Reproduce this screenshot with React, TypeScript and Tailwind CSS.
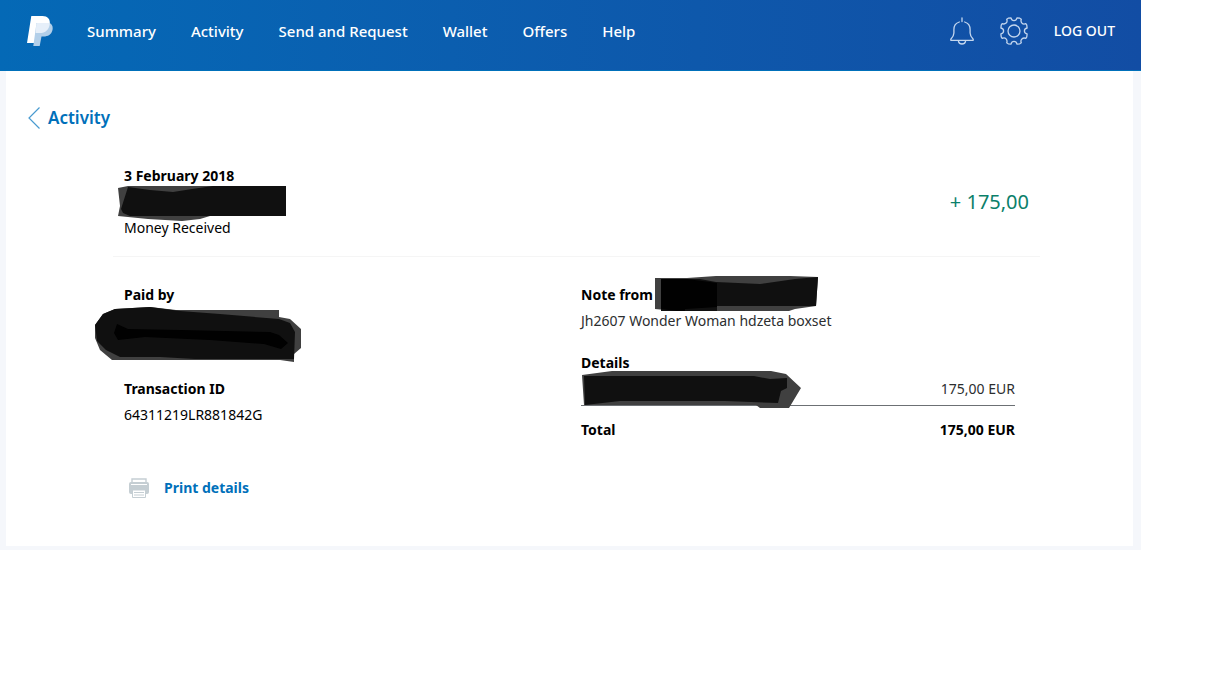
import React from "react";

const navItems = ["Summary", "Activity", "Send and Request", "Wallet", "Offers", "Help"];

function Logo() {
  return (
    <svg className="h-[30px] w-[26px]" viewBox="0 0 26 30" aria-hidden="true">
      <path d="M4.300 0H15.500C20.500 0 23.500 3 22.800 8C22 14 18 17 12.500 17H9.300L7.300 27H0Z" fill="#fff" />
      <path d="M9.500 7H22.500C25 8 26.200 10.500 25.500 14C24.500 18.500 21 20.500 16.500 20.500H14.500L12.700 30H6.300Z" fill="#b2cfe9" />
      <path d="M10.500 7H21C22 7 22.500 7.200 22.800 7.400C22.300 13.500 18.500 17 12.500 17H8.600L9.300 8.200C9.400 7.400 9.800 7 10.500 7Z" fill="#e6eff9" />
    </svg>
  );
}

function BellIcon() {
  return (
    <svg className="h-7 w-6" viewBox="0 0 24 28" fill="none" stroke="#c3d6ee" strokeWidth="1.3" strokeLinecap="round" strokeLinejoin="round">
      <path d="M12 .8V4.500M9.300 5C5.800 6 3.900 9 3.900 12.500V16C3.900 19 2.500 20.500 .8 22.200V23.300H23.200V22.200C21.500 20.500 20.100 19 20.100 16V12.500C20.100 9 18.200 6 14.700 5" />
      <path d="M8.500 24.500C9.300 27.800 14.700 27.800 15.500 24.500" />
    </svg>
  );
}

function GearIcon() {
  return (
    <svg className="h-7 w-7" viewBox="0 0 28 28" fill="none" stroke="#c3d6ee" strokeWidth="1.3" strokeLinejoin="round">
      <circle cx="14" cy="14" r="6" />
      <path d="M8.200 1.200L11 .9C11.400 2.600 12.400 3.600 14 3.600S16.600 2.600 17 .9L19.800 1.200L21.300 2.200C20.700 3.800 20.900 5 21.900 6.100S24.300 7.300 25.800 6.700L26.800 8.200L27.100 11C25.400 11.400 24.400 12.400 24.400 14S25.400 16.600 27.100 17L26.800 19.800L25.800 21.300C24.200 20.700 23 20.900 21.900 21.900S20.700 24.300 21.300 25.800L19.800 26.800L17 27.100C16.600 25.400 15.600 24.400 14 24.400S11.400 25.400 11 27.100L8.200 26.800L6.700 25.800C7.300 24.200 7.100 23 6.100 21.900S3.700 20.700 2.200 21.300L1.200 19.800L.9 17C2.600 16.600 3.600 15.600 3.600 14S2.600 11.400 .9 11L1.200 8.200L2.200 6.700C3.800 7.300 5 7.100 6.100 6.100S7.300 3.700 6.700 2.200Z" />
    </svg>
  );
}

function PrinterIcon() {
  return (
    <svg className="h-5 w-5" viewBox="0 0 20 20" aria-hidden="true">
      <path d="M3 4V1H17V4" fill="#fff" stroke="#c5ced3" strokeWidth="1.4" />
      <path d="M2 4H18A2 2 0 0 1 20 6V14A2 2 0 0 1 18 16H2A2 2 0 0 1 0 14V6A2 2 0 0 1 2 4Z" fill="#c5ced3" />
      <path d="M2 6.500H18" stroke="#fff" />
      <path d="M3.500 12H16.500V19.500H3.500Z" fill="#fff" stroke="#c5ced3" />
      <path d="M5 14.500H15M5 17H15" stroke="#c5ced3" />
    </svg>
  );
}

/* Opaque marks over private details; the details themselves are never rendered. */
function PayerMark() {
  return (
    <svg className="absolute -left-[6px] -top-[2px] h-[36px] w-[168px]" viewBox="118 186 168 36" role="img" aria-label="Hidden name">
      <path d="M118 188L128 186H286V216H210L200 219L182 221L148 219L118 216L120 206Z" fill="#404040" />
      <path d="M128 187L150 190L173 192L192 189L213 186H286V216H130L123 213L121 209Z" fill="#101010" />
    </svg>
  );
}

function PaidByMark() {
  return (
    <svg className="absolute -left-[30px] -top-[2px] h-[58px] w-[208px]" viewBox="94 306 208 58" role="img" aria-label="Hidden name and email">
      <path d="M95 325L103 314L115 309L150 307L176 310H279V317L290 319L301 329V348L294 354V362L280 360H112L100 350L95 338Z" fill="#404040" />
      <path d="M95 325L103 314L115 309L150 307L180 311L220 314L279 319L290 323L295 332L294 359H195L160 357H120L106 350L97 341Z" fill="#101010" />
      <path d="M117 324L128 329L180 330L270 332L279 335L288 343L281 349L264 344L210 340L145 337L118 340L114 333Z" fill="#010101" />
    </svg>
  );
}

function NoteMark() {
  return (
    <svg className="absolute left-0 -top-[6px] h-[35px] w-[163px]" viewBox="655 276 163 35" role="img" aria-label="Hidden name">
      <path d="M655 278H687L716 276H790L818 277L816 306L795 309L789 311H717L685 312L655 309Z" fill="#404040" />
      <path d="M661 279H700L716 282L760 284L795 279L818 277L816 306H717V311H661Z" fill="#101010" />
      <path d="M661 279H687L717 283V307L685 309V312L661 309Z" fill="#010101" />
    </svg>
  );
}

function SenderMark() {
  return (
    <svg className="absolute left-0 -top-[5px] h-[38px] w-[220px]" viewBox="581 371 220 38" role="img" aria-label="Hidden sender">
      <path d="M582 375L612 371H771L786 374L801 388L789 408H760L756 405H584Z" fill="#404040" />
      <path d="M584 376H754L770 379L787 378V388L781 391L778 403L725 401H620L585 405Z" fill="#101010" />
    </svg>
  );
}

export default function App() {
  return (
    <div className="min-h-screen bg-white font-['Noto_Sans','Open_Sans',sans-serif] text-sm leading-[26px] text-black">
      <div className="mr-[69px] bg-[#f5f7fb]">
        <header className="flex h-[71px] items-center justify-between border-b border-[#0070ba] bg-linear-to-r from-[#0469b6] to-[#124da4] pr-[26px] pb-2 pl-[27px] text-white">
          <div className="flex items-center gap-[34px]">
            <a href="#home" aria-label="Home"><Logo /></a>
            <nav className="flex gap-[35px] pb-px text-[15px] font-medium">
              {navItems.map((item) => <a key={item} href="#nav">{item}</a>)}
            </nav>
          </div>
          <div className="flex items-center gap-[26px]">
            <button type="button" aria-label="Notifications"><BellIcon /></button>
            <button type="button" aria-label="Settings"><GearIcon /></button>
            <a href="#logout" className="font-medium">LOG OUT</a>
          </div>
        </header>

        <div className="pr-2 pb-1 pl-[6px]">
          <main className="bg-white pt-[35px] pb-[45px]">
            <a href="#activity" className="ml-[22px] inline-flex h-6 items-center gap-2 align-top text-[17px] font-semibold text-[#0070ba]">
              <svg className="h-[22px] w-3" viewBox="0 0 12 22" fill="none" stroke="#499bd0" strokeWidth="1.2" aria-hidden="true">
                <path d="M11.500 .5L1 11L11.500 21.500" />
              </svg>
              Activity
            </a>

            <article className="mr-[93px] ml-[107px] pt-[34px]">
              <section className="flex items-center justify-between border-b border-[#f5f5f5] px-[11px] pb-[18px]">
                <div className="leading-5">
                  <p className="font-bold">3 February 2018</p>
                  <div className="relative mt-[2px] h-[30px]"><PayerMark /></div>
                  <p>Money Received</p>
                </div>
                <p className="text-xl text-[#0b806a]">+ 175,00</p>
              </section>

              <div className="flex pt-[25px] pr-[25px] pl-[11px]">
                <section className="flex-1">
                  <h2 className="font-bold">Paid by</h2>
                  <div className="relative h-[52px]"><PaidByMark /></div>
                  <h2 className="mt-4 font-bold">Transaction ID</h2>
                  <p>64311219LR881842G</p>
                  <button type="button" className="mt-[47px] ml-[5px] flex items-center gap-[15px] font-bold text-[#0070ba]">
                    <PrinterIcon />
                    Print details
                  </button>
                </section>

                <section className="w-[434px]">
                  <h2 className="flex gap-[2px] font-bold">
                    Note from
                    <span className="relative flex-1"><NoteMark /></span>
                  </h2>
                  <p className="text-[#2c2e2f]">Jh2607 Wonder Woman hdzeta boxset</p>
                  <h2 className="mt-4 font-bold">Details</h2>
                  <table className="w-full border-collapse">
                    <tbody>
                      <tr className="border-b border-[#6c7074] text-[#2c2e2f]">
                        <td className="relative p-0"><SenderMark /></td>
                        <td className="px-0 pt-0 pb-[3px] text-right">175,00 EUR</td>
                      </tr>
                      <tr className="font-bold">
                        <th scope="row" className="px-0 pt-[11px] pb-0 text-left">Total</th>
                        <td className="px-0 pt-[11px] pb-0 text-right">175,00 EUR</td>
                      </tr>
                    </tbody>
                  </table>
                </section>
              </div>
            </article>
          </main>
        </div>
      </div>
    </div>
  );
}
